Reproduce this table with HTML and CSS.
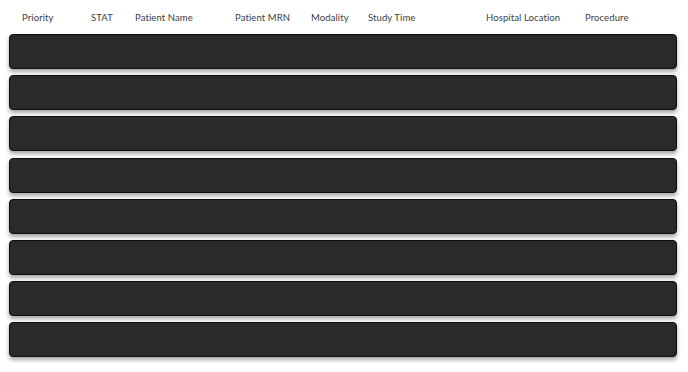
FILE: index.html
```html
<!DOCTYPE html>
<html>
<head>
<meta charset="utf-8">
<link rel="stylesheet" href="styles.css">
</head>
<body>
<div class="page">
  <div class="header">
    <div>Priority</div>
    <div>STAT</div>
    <div>Patient Name</div>
    <div>Patient MRN</div>
    <div>Modality</div>
    <div>Study Time</div>
    <div>Hospital Location</div>
    <div>Procedure</div>
  </div>
  <div class="rows">
    <div class="row"></div>
    <div class="row"></div>
    <div class="row"></div>
    <div class="row"></div>
    <div class="row"></div>
    <div class="row"></div>
    <div class="row"></div>
    <div class="row"></div>
  </div>
</div>
</body>
</html>
```
FILE: styles.css
```css
html, body {
  margin: 0;
  padding: 0;
  background: #ffffff;
}
.page {
  width: 688px;
  height: 372px;
  padding: 0 11px 0 9px;
  box-sizing: border-box;
  font-family: "Lato", "DejaVu Sans", sans-serif;
}
.header {
  display: grid;
  grid-template-columns: 69px 44px 100px 76px 57px 118px 99px 1fr;
  padding: 12px 0 0 13px;
  height: 34px;
  box-sizing: border-box;
  font-size: 9.5px;
  color: #404040;
  letter-spacing: 0.1px;
}
.rows {
  display: flex;
  flex-direction: column;
  gap: 6.2px;
}
.row {
  height: 35px;
  box-sizing: border-box;
  background: #2a2a2a;
  border: 1px solid #0e0e0e;
  border-radius: 4px;
  box-shadow: 0 3px 4px rgba(0, 0, 0, 0.35);
}
```
